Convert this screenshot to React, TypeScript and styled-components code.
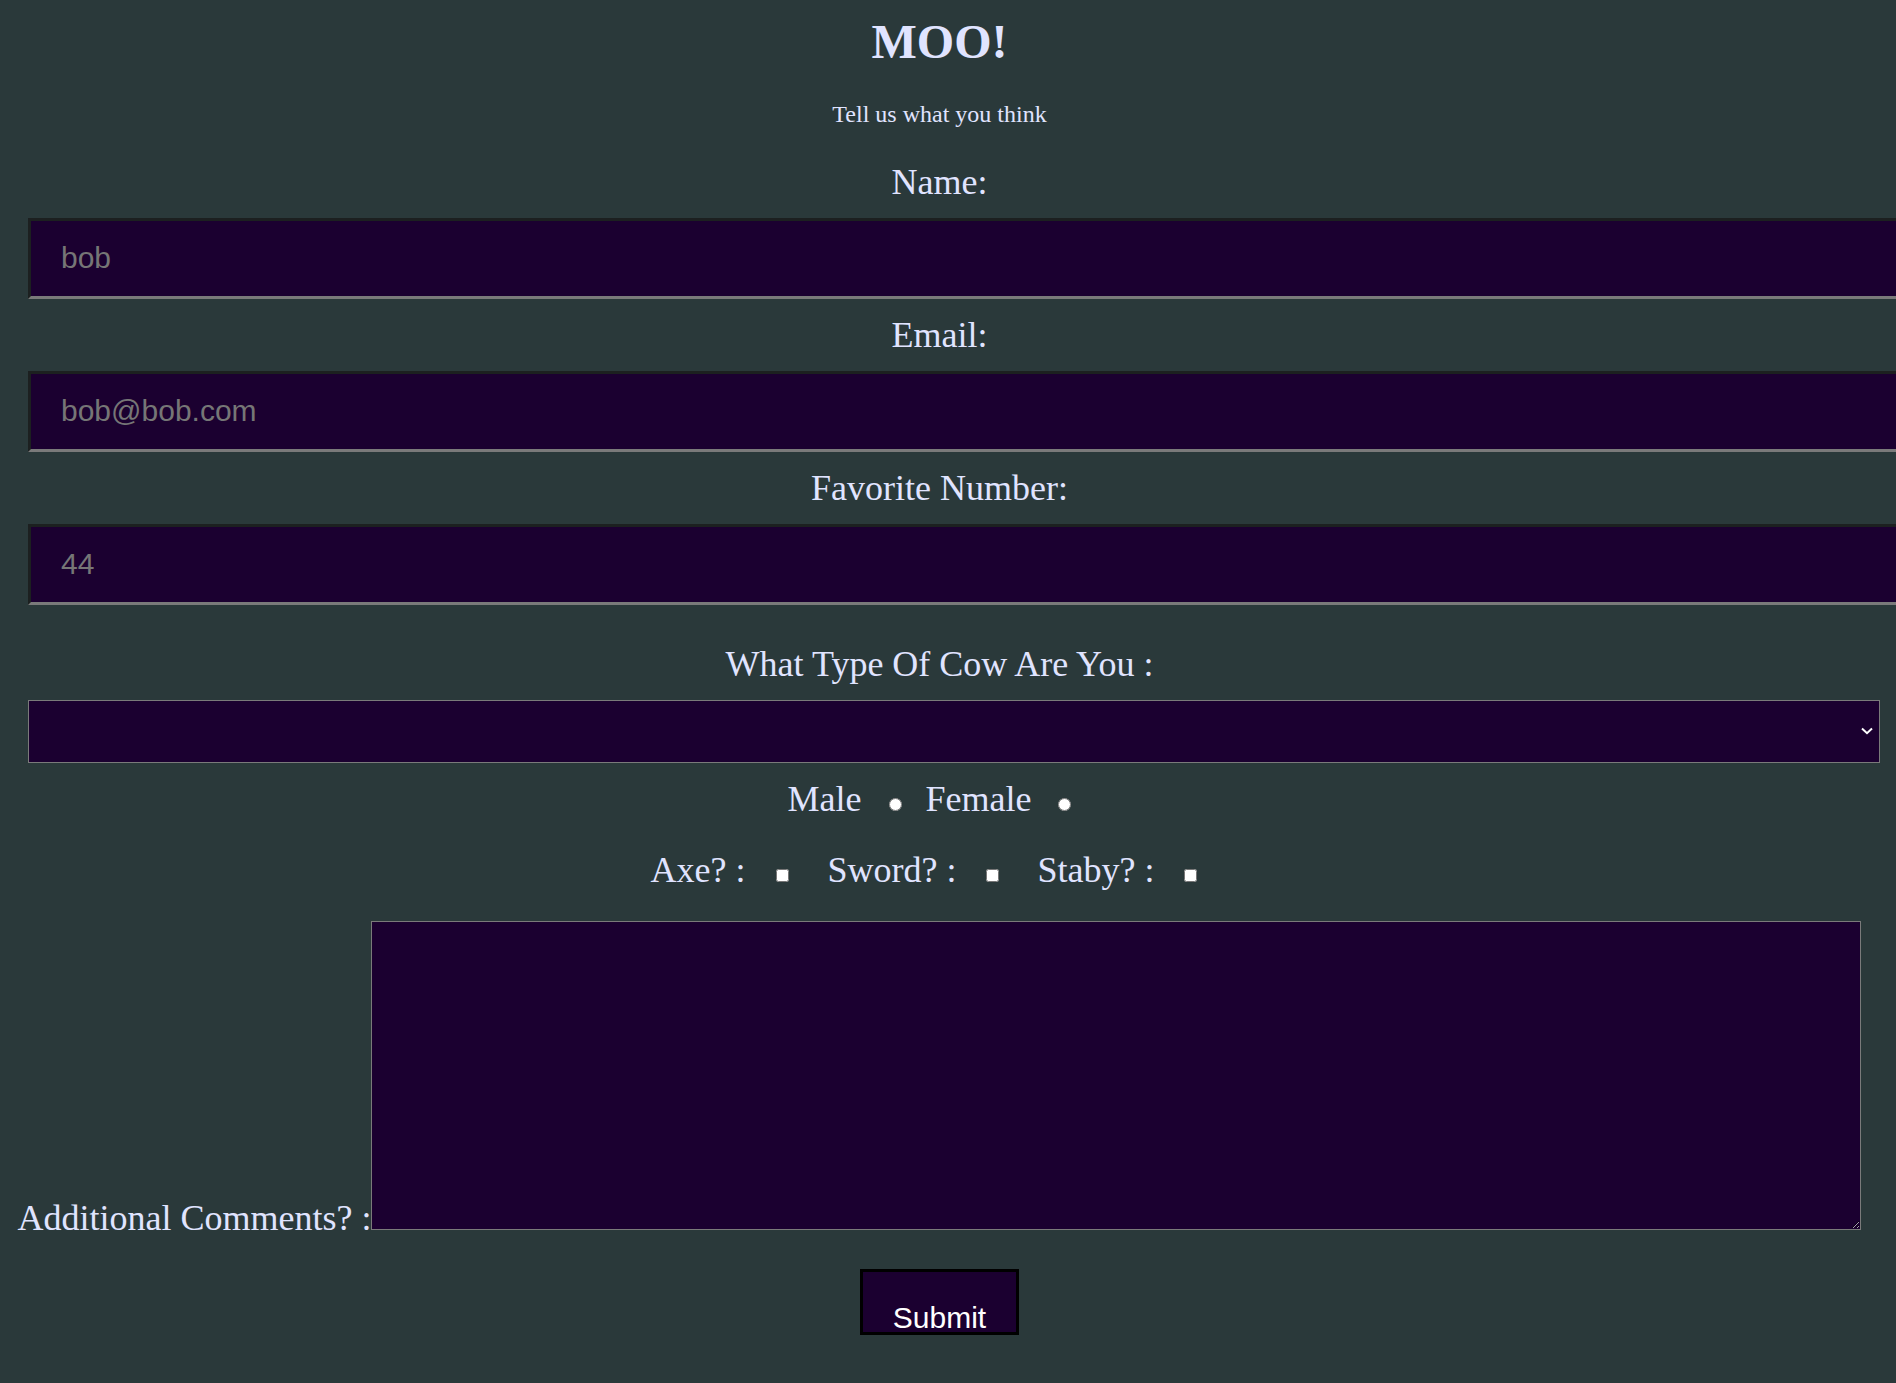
import React from "react";
import styled, { createGlobalStyle } from "styled-components";

const GlobalStyle = createGlobalStyle`
  html {
    overflow: hidden;
    background: #2a393a;
  }
  body {
    margin: 0;
    background: #2a393a;
    color: #e0e4ff;
    font-family: "Liberation Serif", "Times New Roman", serif;
    font-size: 24px;
  }
  input::placeholder, textarea::placeholder {
    color: #767676;
  }
`;

const Page = styled.div`
  box-sizing: content-box;
  width: 1863px;
  min-height: 1369px;
  padding: 14px 0 0 8px;
`;

const Title = styled.h1`
  margin: 0;
  font-size: 48px;
  line-height: 55px;
  font-weight: bold;
  text-align: center;
`;

const Subtitle = styled.p`
  margin: 31px 0 0;
  font-size: 24px;
  line-height: 28px;
  text-align: center;
`;

const FieldLabel = styled.label<{ $top: number }>`
  display: block;
  margin-top: ${(p) => p.$top}px;
  font-size: 36px;
  line-height: 41px;
  text-align: center;
`;

const TextInput = styled.input`
  display: block;
  box-sizing: content-box;
  width: 100%;
  height: 34px;
  margin: 15px 0 0 20px;
  padding: 20px 30px 21px;
  border-width: 3px;
  border-style: solid;
  border-color: #1c2020 #7a7a7a #7a7a7a #1c2020;
  background: #1b0030;
  color: #ffffff;
  font-family: "Liberation Sans", Arial, sans-serif;
  font-size: 30px;
  line-height: 34px;
  outline: none;
`;

const SelectWrap = styled.div`
  position: relative;
  width: calc(100% - 11px);
  margin: 15px 0 0 20px;
`;

const Select = styled.select`
  display: block;
  box-sizing: border-box;
  width: 100%;
  height: 63px;
  margin: 0;
  border: 1px solid #7a7a7a;
  border-radius: 0;
  background: #1b0030;
  color: #ffffff;
  appearance: none;
  -webkit-appearance: none;
  font-family: "Liberation Sans", Arial, sans-serif;
  font-size: 30px;
`;

const Chevron = styled.svg`
  position: absolute;
  right: 7px;
  top: 27px;
  width: 12px;
  height: 8px;
  pointer-events: none;
`;

const ChoiceRow = styled.div<{ $top: number; $gap: number }>`
  display: flex;
  justify-content: center;
  align-items: baseline;
  gap: ${(p) => p.$gap}px;
  margin-top: ${(p) => p.$top}px;
  height: 41px;
`;

const Choice = styled.div`
  display: flex;
  align-items: baseline;
`;

const ChoiceText = styled.span`
  font-size: 36px;
  line-height: 41px;
  white-space: pre;
`;

const Radio = styled.input.attrs({ type: "radio" })`
  width: 13px;
  height: 13px;
  margin: 0 20px 1px 27px;
`;

const Check = styled.input.attrs({ type: "checkbox" })<{ $gap: number }>`
  width: 13px;
  height: 13px;
  margin: 0 31px 1px ${(p) => p.$gap}px;
`;

const CommentRow = styled.div`
  display: flex;
  justify-content: center;
  align-items: flex-end;
  margin-top: 30px;
`;

const CommentLabel = styled.label`
  font-size: 36px;
  line-height: 24px;
  white-space: pre;
`;

const TextArea = styled.textarea`
  box-sizing: border-box;
  width: 1490px;
  height: 309px;
  margin: 0;
  border: 1px solid #7a7a7a;
  background: #1b0030;
  color: #ffffff;
  font-family: "Liberation Mono", monospace;
  font-size: 16px;
  outline: none;
`;

const SubmitButton = styled.button`
  box-sizing: border-box;
  display: flex;
  align-items: flex-end;
  justify-content: center;
  width: 159px;
  height: 66px;
  margin: 39px auto 0;
  padding: 0;
  border: 3px solid #000000;
  background: #1b0030;
  color: #ffffff;
  font-family: "Liberation Sans", Arial, sans-serif;
  font-size: 30px;
  line-height: 28px;
  cursor: pointer;
`;

export default function App() {
  return (
    <>
      <GlobalStyle />
      <Page>
        <Title>MOO!</Title>
        <Subtitle>Tell us what you think</Subtitle>
        <form onSubmit={(e) => e.preventDefault()}>
          <FieldLabel $top={34} htmlFor="name">Name:</FieldLabel>
          <TextInput id="name" type="text" placeholder="bob" />
          <FieldLabel $top={16} htmlFor="email">Email:</FieldLabel>
          <TextInput id="email" type="email" placeholder="bob@bob.com" />
          <FieldLabel $top={16} htmlFor="num">Favorite Number:</FieldLabel>
          <TextInput id="num" type="text" placeholder="44" />
          <FieldLabel $top={39} htmlFor="cow">What Type Of Cow Are You :</FieldLabel>
          <SelectWrap>
            <Select id="cow" defaultValue="">
              <option value=""></option>
              <option value="holstein">Holstein</option>
              <option value="jersey">Jersey</option>
            </Select>
            <Chevron viewBox="0 0 12 8">
              <path d="M1 1.5 L6 6.2 L11 1.5" fill="none" stroke="#ffffff" strokeWidth="2" />
            </Chevron>
          </SelectWrap>
          <ChoiceRow $top={16} $gap={4}>
            <Choice>
              <ChoiceText>Male</ChoiceText>
              <Radio name="sex" value="male" />
            </Choice>
            <Choice>
              <ChoiceText>Female</ChoiceText>
              <Radio name="sex" value="female" />
            </Choice>
          </ChoiceRow>
          <ChoiceRow $top={30} $gap={7}>
            <Choice>
              <ChoiceText>Axe? :</ChoiceText>
              <Check $gap={31} />
            </Choice>
            <Choice>
              <ChoiceText>Sword? :</ChoiceText>
              <Check $gap={30} />
            </Choice>
            <Choice>
              <ChoiceText>Staby? :</ChoiceText>
              <Check $gap={30} />
            </Choice>
          </ChoiceRow>
          <CommentRow>
            <CommentLabel htmlFor="comments">Additional Comments? :</CommentLabel>
            <TextArea id="comments" />
          </CommentRow>
          <SubmitButton type="submit">Submit</SubmitButton>
        </form>
      </Page>
    </>
  );
}
